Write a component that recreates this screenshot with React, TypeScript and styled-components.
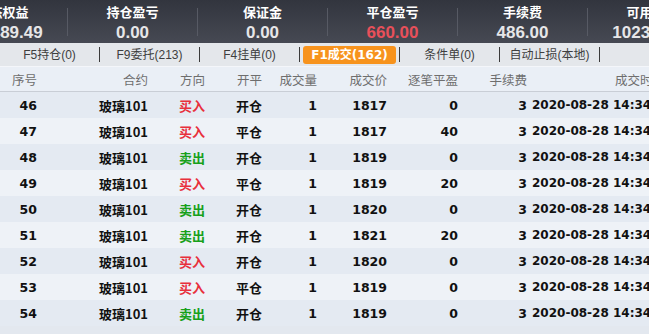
import React from "react";
import styled, { createGlobalStyle } from "styled-components";

const Global = createGlobalStyle`
  html, body { margin: 0; padding: 0; background: #e3e8ef; overflow: hidden; }
  #root { width: 649px; height: 334px; overflow: hidden; }
`;

const Page = styled.div`
  width: 649px;
  height: 334px;
  overflow: hidden;
  display: flex;
  flex-direction: column;
  background: #e3e8ef;
  font-family: "Liberation Sans", "Noto Sans CJK SC", sans-serif;
`;

const Band = styled.div`
  height: 43px;
  flex: none;
  display: flex;
  align-items: stretch;
  background: linear-gradient(#32353e, #464953);
  margin-left: -62px;
  overflow: hidden;
`;

const Stat = styled.div`
  width: 129px;
  flex: none;
  display: flex;
  flex-direction: column;
  align-items: center;
  padding-top: 3px;
  white-space: nowrap;
`;

const StatLabel = styled.div`
  font-family: "Noto Sans CJK SC", sans-serif;
  font-weight: 700;
  font-size: 13px;
  line-height: 17px;
  color: #ffffff;
`;

const StatValue = styled.div<{ $red?: boolean }>`
  font-family: "Liberation Sans", sans-serif;
  font-weight: 700;
  font-size: 17px;
  line-height: 22px;
  margin-top: 2px;
  color: ${(p) => (p.$red ? "#e8505a" : "#e6e6e8")};
`;

const BandDivider = styled.div`
  width: 1px;
  flex: none;
  align-self: center;
  height: 28px;
  background: #575a64;
`;

const Tabs = styled.div`
  height: 23px;
  flex: none;
  display: flex;
  align-items: center;
  background: #e4e7eb;
`;

const Tab = styled.div`
  width: 99px;
  flex: none;
  display: flex;
  justify-content: center;
  align-items: center;
  height: 23px;
`;

const TabLabel = styled.span<{ $active?: boolean }>`
  font-size: 12px;
  line-height: 18px;
  white-space: nowrap;
  color: ${(p) => (p.$active ? "#ffffff" : "#3e3e3e")};
  font-weight: ${(p) => (p.$active ? 700 : 400)};
  background: ${(p) => (p.$active ? "#f7931d" : "transparent")};
  border-radius: 3px;
  padding: ${(p) => (p.$active ? "0 8px" : "0")};
  font-family: ${(p) =>
    p.$active ? '"DejaVu Sans", "Noto Sans CJK SC", sans-serif' : '"Liberation Sans", "Noto Sans CJK SC", sans-serif'};
`;

const TabSep = styled.div`
  width: 1px;
  height: 15px;
  flex: none;
  background: #3a3a3a;
`;

const cols = "37px 111px 57px 57px 55px 70px 71px 69px 1fr";

const HeadRow = styled.div`
  display: grid;
  grid-template-columns: ${cols};
  flex: none;
  align-items: center;
  background: #eaeff6;
  border-bottom: 1px solid #c9ced6;
  border-top: 1px solid #f4f6fa;
  box-sizing: border-box;
  height: 26px;
`;

const HeadCell = styled.div<{ $left?: number }>`
  font-family: "Noto Sans CJK SC", sans-serif;
  font-size: 12.5px;
  color: #6e6e6e;
  white-space: nowrap;
  text-align: ${(p) => (p.$left !== undefined ? "left" : "right")};
  padding-left: ${(p) => p.$left ?? 0}px;
`;

const Row = styled.div<{ $alt?: boolean }>`
  display: grid;
  grid-template-columns: ${cols};
  height: 26px;
  flex: none;
  align-items: center;
  background: ${(p) => (p.$alt ? "#eef2f7" : "#e4eaf2")};
`;

const Cell = styled.div<{ $color?: string; $left?: number }>`
  font-family: "DejaVu Sans", "Noto Sans CJK SC", sans-serif;
  font-weight: 700;
  font-size: 12.5px;
  color: ${(p) => p.$color ?? "#111111"};
  white-space: nowrap;
  text-align: ${(p) => (p.$left !== undefined ? "left" : "right")};
  padding-left: ${(p) => p.$left ?? 0}px;
  overflow: hidden;
`;

const TimeCell = styled(Cell)`
  font-size: 12px;
`;

const CnCell = styled(Cell)`
  font-family: "Noto Sans CJK SC", sans-serif;
  font-size: 13px;
`;

const stats = [
  { label: "动态权益", value: "102489.49" },
  { label: "持仓盈亏", value: "0.00" },
  { label: "保证金", value: "0.00" },
  { label: "平仓盈亏", value: "660.00", red: true },
  { label: "手续费", value: "486.00" },
  { label: "可用资金", value: "102398.49" },
];

const tabs = [
  "F5持仓(0)",
  "F9委托(213)",
  "F4挂单(0)",
  "F1成交(162)",
  "条件单(0)",
  "自动止损(本地)",
];

const rows = [
  [46, "买入", "开仓", 1, 1817, 0],
  [47, "买入", "平仓", 1, 1817, 40],
  [48, "卖出", "开仓", 1, 1819, 0],
  [49, "买入", "平仓", 1, 1819, 20],
  [50, "卖出", "开仓", 1, 1820, 0],
  [51, "卖出", "开仓", 1, 1821, 20],
  [52, "买入", "开仓", 1, 1820, 0],
  [53, "买入", "平仓", 1, 1819, 0],
  [54, "卖出", "开仓", 1, 1819, 0],
] as const;

export default function App() {
  return (
    <Page>
      <Global />
      <Band>
        {stats.map((s, i) => (
          <React.Fragment key={s.label}>
            {i > 0 && <BandDivider />}
            <Stat>
              <StatLabel>{s.label}</StatLabel>
              <StatValue $red={s.red}>{s.value}</StatValue>
            </Stat>
          </React.Fragment>
        ))}
      </Band>
      <Tabs>
        {tabs.map((t, i) => (
          <React.Fragment key={t}>
            <Tab>
              <TabLabel $active={i === 3}>{t}</TabLabel>
            </Tab>
            <TabSep />
          </React.Fragment>
        ))}
      </Tabs>
      <HeadRow>
        <HeadCell>序号</HeadCell>
        <HeadCell>合约</HeadCell>
        <HeadCell>方向</HeadCell>
        <HeadCell>开平</HeadCell>
        <HeadCell>成交量</HeadCell>
        <HeadCell>成交价</HeadCell>
        <HeadCell>逐笔平盈</HeadCell>
        <HeadCell>手续费</HeadCell>
        <HeadCell $left={88}>成交时间</HeadCell>
      </HeadRow>
      {rows.map((r, i) => (
        <Row key={r[0]} $alt={i % 2 === 1}>
          <Cell>{r[0]}</Cell>
          <CnCell>玻璃101</CnCell>
          <CnCell $color={r[1] === "买入" ? "#e8303c" : "#17a01a"}>{r[1]}</CnCell>
          <CnCell>{r[2]}</CnCell>
          <Cell>{r[3]}</Cell>
          <Cell>{r[4]}</Cell>
          <Cell>{r[5]}</Cell>
          <Cell>3</Cell>
          <TimeCell $left={5}>2020-08-28 14:34:56</TimeCell>
        </Row>
      ))}
    </Page>
  );
}
